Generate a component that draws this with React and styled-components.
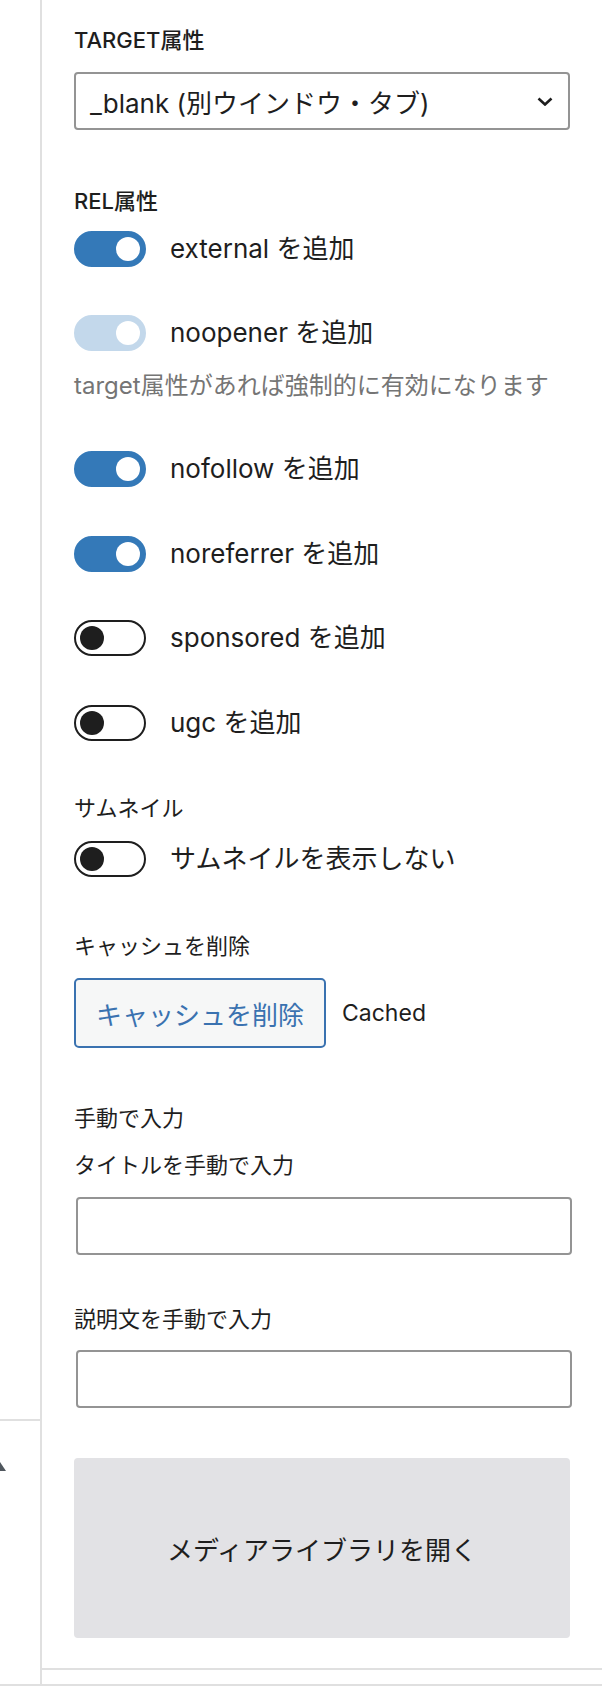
import React from "react"
import styled, { createGlobalStyle } from "styled-components"

const GlobalStyle = createGlobalStyle`
  html, body {
    margin: 0;
    padding: 0;
    background: #fff;
  }
  body {
    font-family: Inter, "Noto Sans CJK JP", sans-serif;
    color: #1e1e1e;
    -webkit-font-smoothing: antialiased;
  }
  * {
    box-sizing: border-box;
  }
`

const relOptions = [
  { key: "external", checked: true, top: 14 },
  { key: "noopener", checked: true, disabled: true, top: 48 },
]

const relOptionsMore = [
  { key: "nofollow", checked: true, top: 49 },
  { key: "noreferrer", checked: true, top: 49 },
  { key: "sponsored", checked: false, top: 48 },
  { key: "ugc", checked: false, top: 49 },
]

const App = () => {
  return (
    <>
      <GlobalStyle />
      <Frame>
        <Main>
          <Rail>
            <RailTop />
            <RailBottom>
              <Caret width="12" height="9" viewBox="0 0 12 9">
                <polygon points="6,0 12,9 0,9" fill="#50575e" />
              </Caret>
            </RailBottom>
          </Rail>
          <Panel>
            <PanelBody>
              <Label $strong>TARGET属性</Label>
              <SelectBox role="combobox" $top={16}>
                <span>_blank (別ウインドウ・タブ)</span>
                <svg width="16" height="9" viewBox="0 0 16 9">
                  <path d="M1.5 1.5 L8 7.5 L14.5 1.5" fill="none" stroke="#1e1e1e" strokeWidth="2.6" />
                </svg>
              </SelectBox>

              <Label $strong $top={55}>REL属性</Label>
              {relOptions.map((o) => (
                <ToggleRow key={o.key} $top={o.top}>
                  <Toggle checked={o.checked} disabled={o.disabled} />
                  <ToggleText>{o.key} を追加</ToggleText>
                </ToggleRow>
              ))}
              <Help $top={19}>target属性があれば強制的に有効になります</Help>
              {relOptionsMore.map((o) => (
                <ToggleRow key={o.key} $top={o.top}>
                  <Toggle checked={o.checked} />
                  <ToggleText>{o.key} を追加</ToggleText>
                </ToggleRow>
              ))}

              <Label $top={51}>サムネイル</Label>
              <ToggleRow $top={17}>
                <Toggle checked={false} />
                <ToggleText>サムネイルを表示しない</ToggleText>
              </ToggleRow>

              <Label $top={53}>キャッシュを削除</Label>
              <ButtonRow $top={16}>
                <SecondaryButton type="button">キャッシュを削除</SecondaryButton>
                <Status>Cached</Status>
              </ButtonRow>

              <Label $top={54}>手動で入力</Label>
              <Label $top={15}>タイトルを手動で入力</Label>
              <TextInput type="text" $top={16} />
              <Label $top={48}>説明文を手動で入力</Label>
              <TextInput type="text" $top={15} />

              <MediaButton type="button" $top={50}>メディアライブラリを開く</MediaButton>
            </PanelBody>
          </Panel>
        </Main>
      </Frame>
    </>
  )
}

const Toggle = ({ checked, disabled }) => (
  <Track $checked={checked} $disabled={disabled}>
    <Thumb $checked={checked} />
  </Track>
)

export default App

const Frame = styled.div`
  width: 602px;
  height: 1688px;
  display: flex;
  flex-direction: column;
`
const Main = styled.div`
  display: flex;
  height: 1686px;
  border-bottom: 2px solid #e0e0e0;
`
const Rail = styled.div`
  width: 42px;
  flex: 0 0 42px;
  display: flex;
  flex-direction: column;
  border-right: 2px solid #e0e0e0;
  overflow: hidden;
`
const RailTop = styled.div`
  flex: 0 0 1419px;
`
const RailBottom = styled.div`
  flex: 1;
  border-top: 2px solid #e0e0e0;
  padding-top: 41px;
`
const Caret = styled.svg`
  display: block;
  margin-left: -6px;
`
const Panel = styled.div`
  flex: 1;
  display: flex;
  flex-direction: column;
`
const PanelBody = styled.div`
  display: flex;
  flex-direction: column;
  padding: 24px 32px 30px;
  border-bottom: 2px solid #e0e0e0;
`
const Label = styled.div`
  margin-top: ${(p) => p.$top || 0}px;
  font-size: 22px;
  line-height: 32px;
  font-weight: ${(p) => (p.$strong ? 500 : 400)};
  text-transform: ${(p) => (p.$strong ? "uppercase" : "none")};
  color: #1e1e1e;
`
const SelectBox = styled.div`
  margin-top: ${(p) => p.$top || 0}px;
  height: 58px;
  display: flex;
  align-items: center;
  justify-content: space-between;
  padding: 0 15px 0 14px;
  border: 2px solid #949494;
  border-radius: 4px;
  font-size: 26px;
  color: #1e1e1e;

  svg {
    flex: 0 0 auto;
  }
`
const ToggleRow = styled.div`
  margin-top: ${(p) => p.$top || 0}px;
  display: flex;
  align-items: center;
  gap: 24px;
  height: 36px;
`
const Track = styled.span`
  flex: 0 0 72px;
  width: 72px;
  height: 36px;
  display: flex;
  align-items: center;
  justify-content: ${(p) => (p.$checked ? "flex-end" : "flex-start")};
  padding: 0 4px;
  border-radius: 18px;
  border: 2px solid
    ${(p) => (p.$disabled ? "#c3d8eb" : p.$checked ? "#3479b8" : "#1e1e1e")};
  background: ${(p) => (p.$disabled ? "#c3d8eb" : p.$checked ? "#3479b8" : "#fff")};
`
const Thumb = styled.span`
  width: 24px;
  height: 24px;
  border-radius: 50%;
  background: ${(p) => (p.$checked ? "#fff" : "#1e1e1e")};
`
const ToggleText = styled.span`
  font-size: 26px;
  line-height: 36px;
  color: #1e1e1e;
`
const Help = styled.p`
  margin: ${(p) => p.$top || 0}px 0 0;
  font-size: 24px;
  line-height: 32px;
  color: #757575;
`
const ButtonRow = styled.div`
  margin-top: ${(p) => p.$top || 0}px;
  display: flex;
  align-items: center;
`
const SecondaryButton = styled.button`
  height: 70px;
  padding: 0 20px;
  border: 2px solid #3a72b0;
  border-radius: 5px;
  background: #f6f7f7;
  color: #3a72b0;
  font-family: inherit;
  font-size: 26px;
  cursor: pointer;
`
const Status = styled.span`
  margin-left: 16px;
  font-size: 23px;
  color: #1e1e1e;
`
const TextInput = styled.input`
  margin: ${(p) => p.$top || 0}px -2px 0 2px;
  height: 58px;
  border: 2px solid #949494;
  border-radius: 4px;
  padding: 0 16px;
  font-family: inherit;
  font-size: 26px;
  background: #fff;
`
const MediaButton = styled.button`
  margin-top: ${(p) => p.$top || 0}px;
  height: 180px;
  width: 100%;
  border: none;
  border-radius: 4px;
  background: #e2e2e5;
  color: #1e1e1e;
  font-family: inherit;
  font-size: 26px;
  cursor: pointer;
`
